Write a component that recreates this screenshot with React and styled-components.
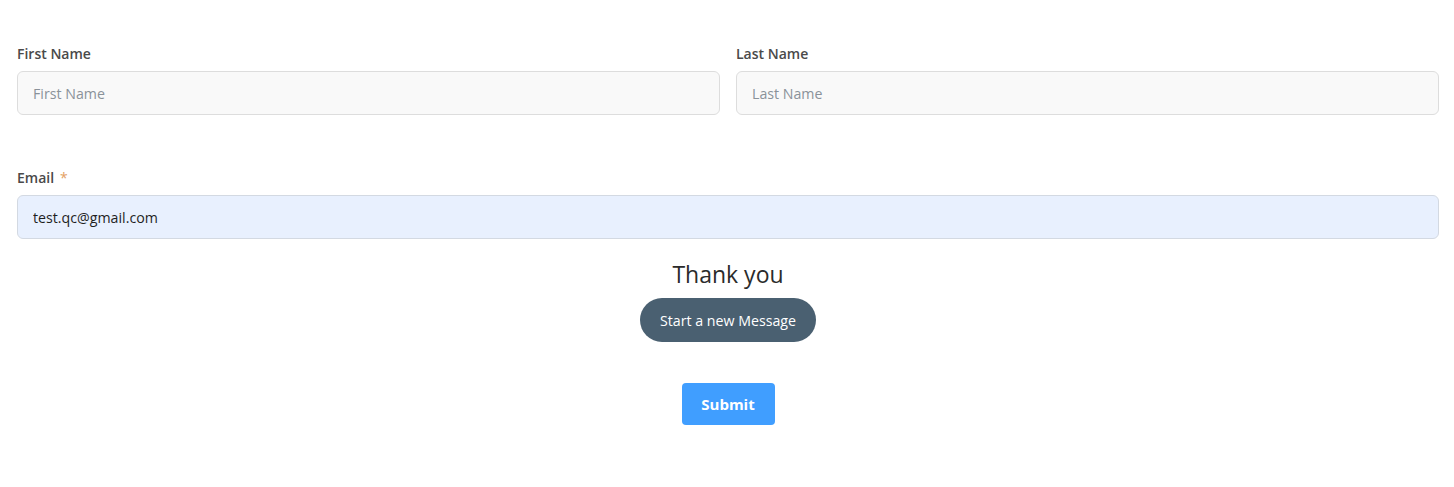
import React from "react"
import styled, { createGlobalStyle } from "styled-components"

const GlobalStyle = createGlobalStyle`
  body {
    margin: 0;
    background: #fff;
    font-family: "Segoe UI", "Open Sans", "Noto Sans", sans-serif;
  }
`

const Form = styled.form`
  padding: 44px 15px 0 17px;
  display: flex;
  flex-direction: column;
`

const Row = styled.div`
  display: grid;
  grid-template-columns: ${p => p.cols || "1fr"};
  gap: 16px;
  margin-bottom: ${p => p.mb || 0}px;
`

const Field = styled.div`
  display: flex;
  flex-direction: column;
`

const Label = styled.label`
  font-size: 14px;
  font-weight: 600;
  color: #4a4a4a;
  line-height: 20px;
  margin-bottom: 7px;
`

const Star = styled.span`
  color: #e3a063;
  margin-left: 6px;
  font-weight: 400;
`

const Input = styled.input`
  box-sizing: border-box;
  height: 44px;
  width: 100%;
  border: 1px solid ${p => (p.filled ? "#d3d9e2" : "#dddddd")};
  border-radius: 6px;
  background: ${p => (p.filled ? "#e8f0fe" : "#f9f9f9")};
  padding: 0 15px;
  font-family: inherit;
  font-size: 14.2px;
  color: #1f1f1f;
  outline: none;

  &::placeholder {
    color: #8a9299;
  }
`

const Thanks = styled.div`
  display: flex;
  flex-direction: column;
  align-items: center;
  margin-top: 19px;
`

const ThanksTitle = styled.h2`
  margin: 0;
  font-size: 23px;
  font-weight: 400;
  color: #2b2b2b;
  line-height: 32px;
`

const PillButton = styled.button`
  margin-top: 8px;
  height: 44px;
  padding: 0 20px;
  border: none;
  border-radius: 22px;
  background: #4a6071;
  color: #fff;
  font-family: inherit;
  font-size: 14.2px;
  cursor: pointer;
`

const SubmitButton = styled.button`
  margin-top: 41px;
  height: 42px;
  width: 93px;
  border: none;
  border-radius: 4px;
  background: #409eff;
  color: #fff;
  font-family: inherit;
  font-size: 15px;
  font-weight: 700;
  cursor: pointer;
`

const App = () => (
  <>
    <GlobalStyle />
    <Form onSubmit={e => e.preventDefault()}>
      <Row cols="1fr 1fr" mb={53}>
        <Field>
          <Label>First Name</Label>
          <Input placeholder="First Name" />
        </Field>
        <Field>
          <Label>Last Name</Label>
          <Input placeholder="Last Name" />
        </Field>
      </Row>
      <Row>
        <Field>
          <Label>
            Email<Star>*</Star>
          </Label>
          <Input filled defaultValue="test.qc@gmail.com" />
        </Field>
      </Row>
      <Thanks>
        <ThanksTitle>Thank you</ThanksTitle>
        <PillButton type="button">Start a new Message</PillButton>
        <SubmitButton type="submit">Submit</SubmitButton>
      </Thanks>
    </Form>
  </>
)

export default App
